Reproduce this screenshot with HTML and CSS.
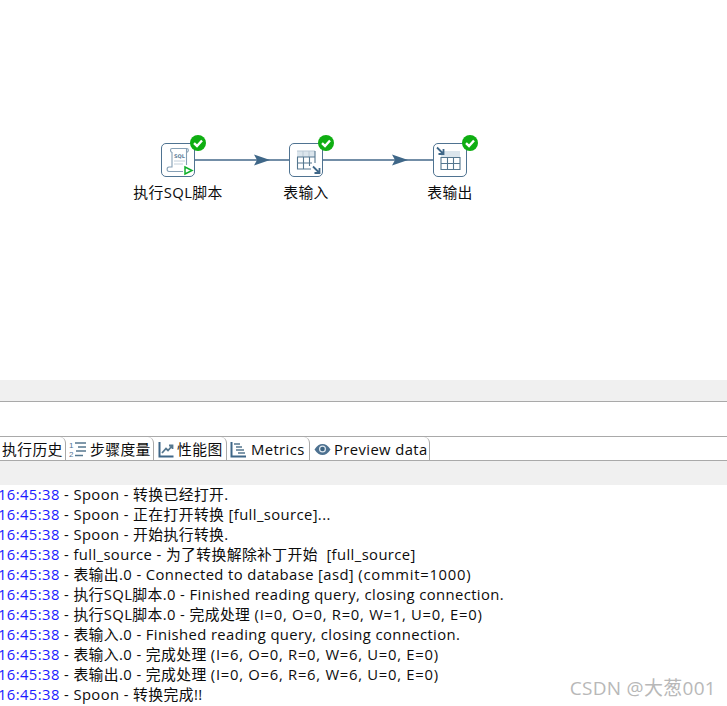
FILE: index.html
```html
<!DOCTYPE html>
<html lang="zh">
<head>
<meta charset="utf-8">
<title>Spoon</title>
<link rel="stylesheet" href="styles.css">
</head>
<body>
<main class="app">
  <section class="canvas">
    <svg class="hops" width="727" height="380" aria-hidden="true">
      <path class="hop" d="M195 160H289M323 160H433"/>
      <path class="head" d="M254 154.500L270 160L254 165.500L257 160Z"/>
      <path class="head" d="M392 154.500L408 160L392 165.500L395 160Z"/>
    </svg>

    <div class="node node-sql">
      <div class="node-box">
        <svg width="32" height="32" viewBox="0 0 32 32" aria-hidden="true">
          <path class="ic-soft" d="M10 4.500H24.500V21M10 4.500C8 4.500 8 8 10 8.500V23H7C4.500 23 4.500 27.500 7 27.500H21"/>
          <path class="ic-soft" d="M24.500 4.500C27 4.500 27 8 24.500 8.500"/>
          <text x="12" y="14" class="ic-text">SQL</text>
          <path class="ic-line" d="M12 17H23M12 20H21"/>
          <path class="ic-green" d="M23 23L30 26.500L23 30Z"/>
        </svg>
      </div>
      <span class="node-badge"><svg width="16" height="16" viewBox="0 0 16 16" aria-hidden="true"><circle cx="8" cy="8" r="8" fill="#0fae12"/><path d="M4 8.200L7 11L12 5.500" fill="none" stroke="#fff" stroke-width="2.400"/></svg></span>
      <span class="node-label">执行SQL脚本</span>
    </div>

    <div class="node node-in">
      <div class="node-box">
        <svg width="32" height="32" viewBox="0 0 32 32" aria-hidden="true">
          <rect class="ic-head" x="7" y="7" width="18" height="6"/>
          <path class="ic-grid-soft" d="M7 7H25M13 7V13M19 7V13"/>
          <path class="ic-grid" d="M7.500 13V25H21M7 13H25M25 7V19M7 19H22M13.500 13V25M19.500 13V22"/>
          <path class="ic-arrow" d="M23 22.500L29.500 29M29.500 24V29H24.500"/>
        </svg>
      </div>
      <span class="node-badge"><svg width="16" height="16" viewBox="0 0 16 16" aria-hidden="true"><circle cx="8" cy="8" r="8" fill="#0fae12"/><path d="M4 8.200L7 11L12 5.500" fill="none" stroke="#fff" stroke-width="2.400"/></svg></span>
      <span class="node-label">表输入</span>
    </div>

    <div class="node node-out">
      <div class="node-box">
        <svg width="32" height="32" viewBox="0 0 32 32" aria-hidden="true">
          <rect class="ic-head" x="7" y="7" width="19" height="6"/>
          <path class="ic-grid" d="M7 13.500H26V25.500H7ZM7 19.500H26M13.500 13V25M19.500 13V25"/>
          <path class="ic-arrow" d="M3 3.500L9.500 10M9.500 5V10H4.500"/>
        </svg>
      </div>
      <span class="node-badge"><svg width="16" height="16" viewBox="0 0 16 16" aria-hidden="true"><circle cx="8" cy="8" r="8" fill="#0fae12"/><path d="M4 8.200L7 11L12 5.500" fill="none" stroke="#fff" stroke-width="2.400"/></svg></span>
      <span class="node-label">表输出</span>
    </div>
  </section>

  <div class="band band-top"></div>
  <div class="spacer"></div>

  <nav class="tabs">
    <div class="tab tab-first">执行历史</div>
    <div class="tab tab-steps">
      <svg width="17" height="17" viewBox="0 0 17 17" aria-hidden="true">
        <text x="0" y="7" class="num">1</text><text x="0" y="16" class="num">2</text>
        <path class="ic-steps" d="M6 2H17M9 6H17M7 10H17M6 14.500H14"/>
      </svg>
      <span>步骤度量</span>
    </div>
    <div class="tab tab-perf">
      <svg width="16" height="17" viewBox="0 0 16 17" aria-hidden="true">
        <path class="ic-axis" d="M1.500 1V15.500H15.500"/>
        <path class="ic-trend" d="M4 12L8 7.500L10 9.500L14 5M11 4.500H14.500V8"/>
      </svg>
      <span>性能图</span>
    </div>
    <div class="tab tab-metrics">
      <svg width="17" height="17" viewBox="0 0 17 17" aria-hidden="true">
        <path class="ic-axis" d="M1.500 1V15.500H16"/>
        <path class="ic-steps" d="M4 3H10M6 6H12M6 9H14M8 12H15"/>
      </svg>
      <span>Metrics</span>
    </div>
    <div class="tab tab-preview">
      <svg width="17" height="13" viewBox="0 0 17 13" aria-hidden="true">
        <path fill="#4d7190" d="M0.500 6.500C3 2.500 5.500 1 8.500 1S14 2.500 16.500 6.500C14 10.500 11.500 12 8.500 12S3 10.500 0.500 6.500Z"/>
        <circle cx="8.500" cy="6" r="3.500" fill="#dfe7ee"/>
        <circle cx="8.500" cy="6" r="2.300" fill="#3c6382"/>
      </svg>
      <span>Preview data</span>
    </div>
    <div class="tab-rest"></div>
  </nav>

  <div class="band band-bottom"></div>

  <section class="log">
    <div class="row"><b>16:45:38</b> - Spoon - 转换已经打开.</div>
    <div class="row"><b>16:45:38</b> - Spoon - 正在打开转换 [full_source]...</div>
    <div class="row"><b>16:45:38</b> - Spoon - 开始执行转换.</div>
    <div class="row"><b>16:45:38</b> - full_source - 为了转换解除补丁开始&nbsp; [full_source]</div>
    <div class="row"><b>16:45:38</b> - 表输出.0 - Connected to database [asd] <span class="stats">(commit=1000)</span></div>
    <div class="row"><b>16:45:38</b> - 执行SQL脚本.0 - Finished reading query, closing connection.</div>
    <div class="row"><b>16:45:38</b> - 执行SQL脚本.0 - 完成处理 <span class="stats">(I=0, O=0, R=0, W=1, U=0, E=0)</span></div>
    <div class="row"><b>16:45:38</b> - 表输入.0 - Finished reading query, closing connection.</div>
    <div class="row"><b>16:45:38</b> - 表输入.0 - 完成处理 <span class="stats">(I=6, O=0, R=0, W=6, U=0, E=0)</span></div>
    <div class="row"><b>16:45:38</b> - 表输出.0 - 完成处理 <span class="stats">(I=0, O=6, R=6, W=6, U=0, E=0)</span></div>
    <div class="row"><b>16:45:38</b> - Spoon - 转换完成!!</div>
  </section>

  <div class="watermark">CSDN @大葱001</div>
</main>
</body>
</html>
```

FILE: styles.css
```css
html, body {
  margin: 0;
  padding: 0;
  background: #fff;
}

body {
  width: 727px;
  height: 706px;
  overflow: hidden;
  font-family: "Open Sans", "Noto Sans", "Noto Sans CJK SC", sans-serif;
  font-size: 14.800px;
  letter-spacing: 0.400px;
  color: #0c0c0c;
}

.app {
  position: relative;
  display: flex;
  flex-direction: column;
  width: 727px;
  height: 706px;
  overflow: hidden;
}

/* canvas */
.canvas {
  position: relative;
  flex: 0 0 380px;
}

.hops {
  position: absolute;
  left: 0;
  top: 0;
}

.hop {
  fill: none;
  stroke: #45698a;
  stroke-width: 1.300;
}

.head {
  fill: #3f6788;
}

.node {
  position: absolute;
  top: 143px;
  width: 34px;
  height: 60px;
}

.node-sql { left: 161px; }
.node-in { left: 289px; }
.node-out { left: 433px; }

.node-box {
  box-sizing: border-box;
  width: 34px;
  height: 34px;
  background: #fff;
  border: 1px solid #4f7391;
  border-radius: 5px;
}

.node-box svg {
  display: block;
}

.node-badge {
  position: absolute;
  left: 29px;
  top: -8px;
  width: 16px;
  height: 16px;
}

.node-badge svg {
  display: block;
}

.node-label {
  position: absolute;
  left: 50%;
  top: 39px;
  transform: translateX(-50%);
  white-space: nowrap;
  line-height: 20px;
}

/* node icons */
.ic-soft {
  fill: none;
  stroke: #86a0b5;
  stroke-width: 1.100;
}

.ic-line {
  fill: none;
  stroke: #c2cfda;
  stroke-width: 1;
}

.ic-text {
  font-family: "DejaVu Sans", sans-serif;
  font-size: 5px;
  font-weight: 700;
  letter-spacing: 0;
  fill: #5f809a;
}

.ic-green {
  fill: #fff;
  stroke: #10b02a;
  stroke-width: 1.500;
}

.ic-head {
  fill: #dbe5ec;
}

.ic-grid {
  fill: none;
  stroke: #55778f;
  stroke-width: 1.100;
}

.ic-grid-soft {
  fill: none;
  stroke: #b9c8d4;
  stroke-width: 1;
}

.ic-arrow {
  fill: none;
  stroke: #3f6788;
  stroke-width: 1.800;
}

/* bands */
.band {
  background: #f0f0f0;
}

.band-top {
  flex: 0 0 21px;
  border-bottom: 1px solid #a9a9a9;
}

.spacer {
  flex: 0 0 34px;
}

.band-bottom {
  flex: 0 0 24px;
}

/* tabs */
.tabs {
  box-sizing: border-box;
  flex: 0 0 25px;
  display: flex;
  align-items: stretch;
  border-top: 1px solid #a9a9a9;
  border-bottom: 1px solid #a9a9a9;
  background: #fff;
}

.tab {
  box-sizing: border-box;
  display: flex;
  align-items: center;
  gap: 2px;
  height: 23px;
  padding-top: 1px;
  white-space: nowrap;
  border-right: 1px solid #a9a9a9;
  border-top-right-radius: 6px;
  line-height: 22px;
}

.tab-first { width: 66px; padding-left: 2px; }
.tab-steps { width: 88px; padding-left: 3px; gap: 4px; }
.tab-perf { width: 73px; padding-left: 4px; gap: 3px; }
.tab-metrics { width: 83px; padding-left: 3px; gap: 4px; }
.tab-preview { width: 120px; padding-left: 4px; gap: 3px; }

.tab-rest {
  flex: 1;
}

.num {
  font-family: "Liberation Sans", sans-serif;
  font-size: 8px;
  letter-spacing: 0;
  fill: #4f7391;
}

.ic-steps {
  fill: none;
  stroke: #55778f;
  stroke-width: 1.500;
}

.ic-axis {
  fill: none;
  stroke: #3f6788;
  stroke-width: 2;
}

.ic-trend {
  fill: none;
  stroke: #55778f;
  stroke-width: 1.800;
}

/* log */
.log {
  flex: 1;
  margin-left: -2px;
}

.row {
  height: 20px;
  line-height: 18px;
  white-space: nowrap;
}

.row b {
  font-weight: 400;
  color: #1a1aff;
}

.stats {
  letter-spacing: 0.730px;
}

.watermark {
  position: absolute;
  right: 11px;
  top: 676px;
  line-height: 24px;
  font-size: 19px;
  letter-spacing: 0.300px;
  color: #b8b8b8;
}
```
